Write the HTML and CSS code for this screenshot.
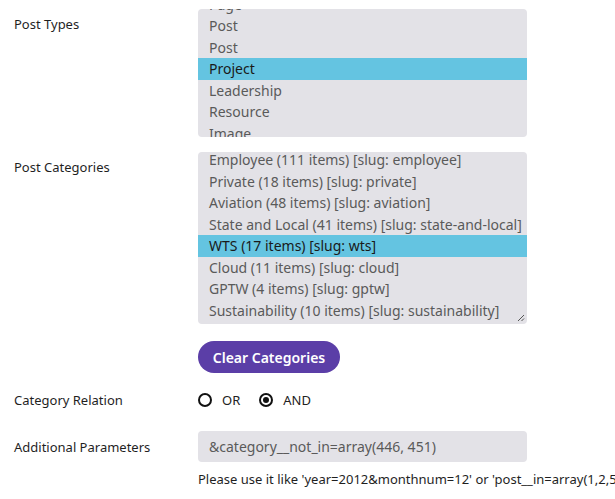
FILE: index.html
```html
<!DOCTYPE html>
<html>
<head>
<meta charset="utf-8">
<link rel="stylesheet" href="styles.css">
</head>
<body>
<form class="form">
  <div class="row row-types">
    <div class="label">Post Types</div>
    <div class="listbox lb-types">
      <ul class="options">
        <li>Page</li>
        <li>Post</li>
        <li>Post</li>
        <li class="sel">Project</li>
        <li>Leadership</li>
        <li>Resource</li>
        <li>Image</li>
      </ul>
    </div>
  </div>

  <div class="row row-cats">
    <div class="label">Post Categories</div>
    <div class="field">
      <div class="listbox lb-cats">
        <ul class="options">
          <li>Employee (111 items) [slug: employee]</li>
          <li>Private (18 items) [slug: private]</li>
          <li>Aviation (48 items) [slug: aviation]</li>
          <li>State and Local (41 items) [slug: state-and-local]</li>
          <li class="sel">WTS (17 items) [slug: wts]</li>
          <li>Cloud (11 items) [slug: cloud]</li>
          <li>GPTW (4 items) [slug: gptw]</li>
          <li>Sustainability (10 items) [slug: sustainability]</li>
        </ul>
        <svg class="grip" width="8" height="8" viewBox="0 0 8 8"><path d="M7 1L1 7M7 4.5L4.5 7" stroke="#555" stroke-width="1" fill="none"/></svg>
      </div>
      <button type="button" class="btn">Clear Categories</button>
    </div>
  </div>

  <div class="row row-rel">
    <div class="label">Category Relation</div>
    <div class="radios">
      <span class="radio"><span class="dot"></span>OR</span>
      <span class="radio"><span class="dot on"></span>AND</span>
    </div>
  </div>

  <div class="row row-params">
    <div class="label">Additional Parameters</div>
    <div class="field">
      <div class="input">&amp;category__not_in=array(446, 451)</div>
    </div>
  </div>
  <div class="help">Please use it like 'year=2012&amp;monthnum=12' or 'post__in=array(1,2,5)'</div>
</form>
</body>
</html>
```

FILE: styles.css
```css
html, body {
  margin: 0;
  padding: 0;
  background: #ffffff;
  overflow: hidden;
}
body {
  font-family: "Noto Sans", "Open Sans", sans-serif;
  color: #222222;
  width: 615px;
}
.form {
  padding: 9px 0 0 14px;
}
.row {
  display: grid;
  grid-template-columns: 184px 329px;
}
.label {
  font-size: 13px;
  line-height: 20px;
  padding-top: 5px;
  color: #1f1f1f;
}
.listbox {
  position: relative;
  background: #e3e2e7;
  border-radius: 4px;
  overflow: hidden;
}
.lb-types { height: 128px; }
.lb-cats { height: 172px; }
.options {
  list-style: none;
  margin: 0;
  padding: 0;
}
.lb-types .options { margin-top: -15.5px; }
.lb-cats .options { margin-top: -3px; }
.options li {
  font-size: 14px;
  line-height: 21.5px;
  height: 21.5px;
  padding-left: 11px;
  color: #5a5a5a;
  white-space: nowrap;
}
.options li.sel {
  background: #64c4e1;
  color: #1a1a1a;
}
.grip {
  position: absolute;
  right: 2px;
  bottom: 2px;
}
.row-cats { margin-top: 15px; }
.btn {
  display: block;
  margin-top: 17px;
  width: 142px;
  height: 32px;
  border: 0;
  border-radius: 16px;
  background: #5b3ea7;
  color: #ffffff;
  font-family: "Noto Sans", "Open Sans", sans-serif;
  font-size: 14px;
  font-weight: 600;
  padding: 0;
}
.row-rel {
  margin-top: 17px;
}
.row-rel .label { padding-top: 0; }
.radios {
  display: flex;
  align-items: center;
  gap: 19px;
  font-size: 13px;
  line-height: 20px;
}
.radio {
  display: flex;
  align-items: center;
  gap: 10px;
}
.dot {
  width: 14px;
  height: 14px;
  box-sizing: border-box;
  border: 2px solid #111111;
  border-radius: 50%;
  display: flex;
  align-items: center;
  justify-content: center;
}
.dot.on::after {
  content: "";
  width: 6px;
  height: 6px;
  border-radius: 50%;
  background: #111111;
}
.row-params {
  margin-top: 21px;
  align-items: center;
}
.row-params .label { padding-top: 0; }
.input {
  height: 31px;
  box-sizing: border-box;
  background: #e3e2e7;
  border-radius: 4px;
  padding-left: 11px;
  font-size: 14px;
  line-height: 31px;
  color: #5a5a5a;
}
.help {
  margin: 7px 0 0 184px;
  font-size: 13px;
  line-height: 20px;
  white-space: nowrap;
  color: #1f1f1f;
}
```
